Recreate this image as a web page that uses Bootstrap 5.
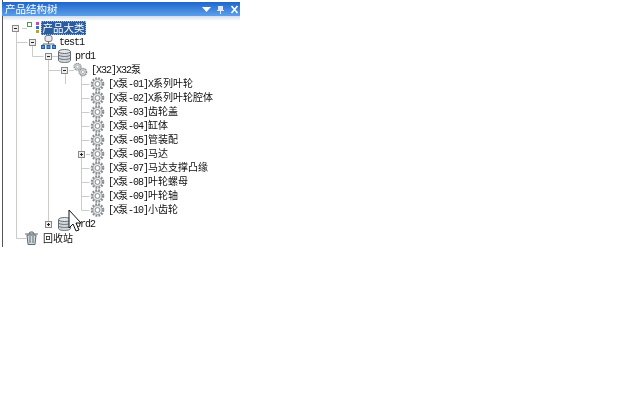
<!DOCTYPE html>
<html lang="zh"><head><meta charset="utf-8">
<link href="https://cdn.jsdelivr.net/npm/bootstrap@5.3.0/dist/css/bootstrap.min.css" rel="stylesheet">
<style>
html,body{background:#fff;margin:0}
.pane{width:238px;height:247px;margin-left:2px;padding-top:2px;position:relative;border-left:1px solid #555;filter:blur(.3px)}
.cap{height:14px;margin-left:-1px;background:linear-gradient(#1f66cc,#5c9fea);color:#fff;font:10.5px/14px "Noto Sans CJK SC",sans-serif;padding-left:3px}
.capshade{height:5px;background:linear-gradient(#cfdcec,#fff)}
.forest{position:relative}
.rw{height:14px;font:10px/14px "Liberation Mono",monospace;letter-spacing:-1px;color:#111;white-space:nowrap}
.han{font:10px/14px "Noto Sans CJK SC",sans-serif;letter-spacing:0}
.drop{margin-top:2px}
.lv0{padding-left:9px}.lv1{padding-left:26px}.lv2{padding-left:42px}.lv3{padding-left:58px}.lv4{padding-left:75px}
.tog{width:7px;height:7px;flex:none;border:1px solid #8a8a8a;background:#eee;margin-right:5px;position:relative}
.tog::before{content:"";position:absolute;left:1px;top:2px;width:3px;height:1px;background:#222}
.tog.pl::after{content:"";position:absolute;left:2px;top:1px;width:1px;height:3px;background:#222}
.gap{width:12px;flex:none}
.ic{width:15px;height:14px;flex:none;margin-right:3px}
.sel{background:#2a5c9e;color:#fff;height:14px;width:45px;margin-left:-1px;text-align:center;font:10.5px/12px "Noto Sans CJK SC",sans-serif;border:1px dotted #9db6d6;letter-spacing:0}
.wires{position:absolute;left:0;top:0;width:235px;height:226px}
.pointer{position:absolute;left:65px;top:188px;width:14px;height:24px}
</style></head><body>
<svg width="0" height="0" class="d-block"><defs>
<g id="gear"><circle cx="7.500" cy="7" r="5.600" fill="none" stroke="#858b90" stroke-width="2.400" stroke-dasharray="1.800 1.130"/><circle cx="7.500" cy="7" r="4.600" fill="#e6e9eb" stroke="#8b9095" stroke-width=".8"/><circle cx="7.500" cy="7" r="2.400" fill="#fff" stroke="#7d8286" stroke-width=".9"/></g>
<g id="db"><path d="M1.500 2.500v9c0 1.100 2.700 2 6 2s6-.9 6-2v-9" fill="#cfd5da" stroke="#666d72"/><ellipse cx="7.500" cy="2.500" rx="6" ry="2" fill="#e4e8eb" stroke="#666d72"/><path d="M1.500 5.500c0 1.100 2.700 2 6 2s6-.9 6-2M1.500 8.500c0 1.100 2.700 2 6 2s6-.9 6-2" fill="none" stroke="#666d72"/></g>
</defs></svg>
<section class="pane">
<header class="cap d-flex align-items-center justify-content-between">
<span>产品结构树</span>
<svg width="39" height="11" viewBox="0 0 39 11"><path d="M1 3h9L5.500 8z" fill="#fff"/><path d="M17 2h5v4h1v1h-3v3h-1V7h-3V6h1z" fill="#dfe9f7"/><path d="M30.500 2l6 7M36.500 2l-6 7" stroke="#fff" stroke-width="1.600"/></svg>
</header>
<div class="capshade"></div>
<main class="forest">
<svg class="wires" viewBox="0 0 235 226"><g stroke="#c9cdca" fill="none"><path d="M13.500 11v206.500h10M19 7.500h5M13.500 21.500h11M29.500 25v10.500h11M45.500 39v164M49 35.500h6M45.500 49.500h12M62.500 53v10M66 49.500h5M78.500 53v136.500M78.500 63.500h8M78.500 77.500h8M78.500 91.500h8M78.500 105.500h8M78.500 119.500h8M83 133.500h4M78.500 147.500h8M78.500 161.500h8M78.500 175.500h8M78.500 189.500h8"/></g></svg>
<div class="rw lv0 d-flex align-items-center position-relative"><i class="tog"></i><svg class="ic" viewBox="0 0 15 14"><rect x="3.500" y="1.500" width="4" height="4" fill="#fff" stroke="#3aa83a"/><rect x="12" y="1" width="3" height="3" fill="#b84fc0"/><rect x="12" y="5" width="3" height="3" fill="#3a6fd0"/><rect x="12" y="9" width="3" height="3" fill="#b7a13a"/></svg><span class="sel">产品大类</span></div>
<div class="rw lv1 d-flex align-items-center position-relative"><i class="tog"></i><svg class="ic" viewBox="0 0 15 14"><rect x="4" y=".5" width="7" height="6" rx="2" fill="#e6e9eb" stroke="#777"/><path d="M7.500 6.500V9M2 10.500V9h11v1.500" stroke="#666" fill="none"/><rect x=".5" y="10.500" width="3" height="3" fill="#5a94dc" stroke="#1f5cb4"/><rect x="6" y="10.500" width="3" height="3" fill="#5a94dc" stroke="#1f5cb4"/><rect x="11.500" y="10.500" width="3" height="3" fill="#5a94dc" stroke="#1f5cb4"/></svg><span class="drop">test1</span></div>
<div class="rw lv2 d-flex align-items-center position-relative"><i class="tog"></i><svg class="ic" viewBox="0 0 15 14"><use href="#db"/></svg><span class="drop">prd1</span></div>
<div class="rw lv3 d-flex align-items-center position-relative"><i class="tog"></i><svg class="ic" viewBox="0 0 15 14"><g transform="translate(0 -.5) scale(.6)"><use href="#gear"/></g><g transform="translate(5 4.500) scale(.65)"><use href="#gear"/></g></svg><span>[X32]X32<span class="han">泵</span></span></div>
<div class="rw lv4 d-flex align-items-center position-relative"><i class="gap"></i><svg class="ic" viewBox="0 0 15 14"><use href="#gear"/></svg><span>[X<span class="han">泵</span>-01]X<span class="han">系列叶轮</span></span></div>
<div class="rw lv4 d-flex align-items-center position-relative"><i class="gap"></i><svg class="ic" viewBox="0 0 15 14"><use href="#gear"/></svg><span>[X<span class="han">泵</span>-02]X<span class="han">系列叶轮腔体</span></span></div>
<div class="rw lv4 d-flex align-items-center position-relative"><i class="gap"></i><svg class="ic" viewBox="0 0 15 14"><use href="#gear"/></svg><span>[X<span class="han">泵</span>-03]<span class="han">齿轮盖</span></span></div>
<div class="rw lv4 d-flex align-items-center position-relative"><i class="gap"></i><svg class="ic" viewBox="0 0 15 14"><use href="#gear"/></svg><span>[X<span class="han">泵</span>-04]<span class="han">缸体</span></span></div>
<div class="rw lv4 d-flex align-items-center position-relative"><i class="gap"></i><svg class="ic" viewBox="0 0 15 14"><use href="#gear"/></svg><span>[X<span class="han">泵</span>-05]<span class="han">管装配</span></span></div>
<div class="rw lv4 d-flex align-items-center position-relative"><i class="tog pl"></i><svg class="ic" viewBox="0 0 15 14"><use href="#gear"/></svg><span>[X<span class="han">泵</span>-06]<span class="han">马达</span></span></div>
<div class="rw lv4 d-flex align-items-center position-relative"><i class="gap"></i><svg class="ic" viewBox="0 0 15 14"><use href="#gear"/></svg><span>[X<span class="han">泵</span>-07]<span class="han">马达支撑凸缘</span></span></div>
<div class="rw lv4 d-flex align-items-center position-relative"><i class="gap"></i><svg class="ic" viewBox="0 0 15 14"><use href="#gear"/></svg><span>[X<span class="han">泵</span>-08]<span class="han">叶轮螺母</span></span></div>
<div class="rw lv4 d-flex align-items-center position-relative"><i class="gap"></i><svg class="ic" viewBox="0 0 15 14"><use href="#gear"/></svg><span>[X<span class="han">泵</span>-09]<span class="han">叶轮轴</span></span></div>
<div class="rw lv4 d-flex align-items-center position-relative"><i class="gap"></i><svg class="ic" viewBox="0 0 15 14"><use href="#gear"/></svg><span>[X<span class="han">泵</span>-10]<span class="han">小齿轮</span></span></div>
<div class="rw lv2 d-flex align-items-center position-relative"><i class="tog pl"></i><svg class="ic" viewBox="0 0 15 14"><use href="#db"/></svg><span class="drop">prd2</span></div>
<div class="rw lv0 d-flex align-items-center position-relative"><i class="gap"></i><svg class="ic me-1" viewBox="0 0 15 14"><path d="M1 3h13M5 3l1-2h3l1 2" stroke="#666" fill="#ddd"/><path d="M3 4l1 9.500h7l1-9.500z" fill="#cfdde2" stroke="#5f6a6e"/><path d="M6 5v7M9 5v7" stroke="#5f6a6e"/></svg><span class="han">回收站</span></div>
<svg class="pointer" viewBox="0 0 14 24"><path d="M1 1v18l4-4 3 7 3-1-3-7h5z" fill="#fff" stroke="#111"/></svg>
</main>
</section>
<script src="https://cdn.jsdelivr.net/npm/bootstrap@5.3.0/dist/js/bootstrap.bundle.min.js"></script>
</body></html>
